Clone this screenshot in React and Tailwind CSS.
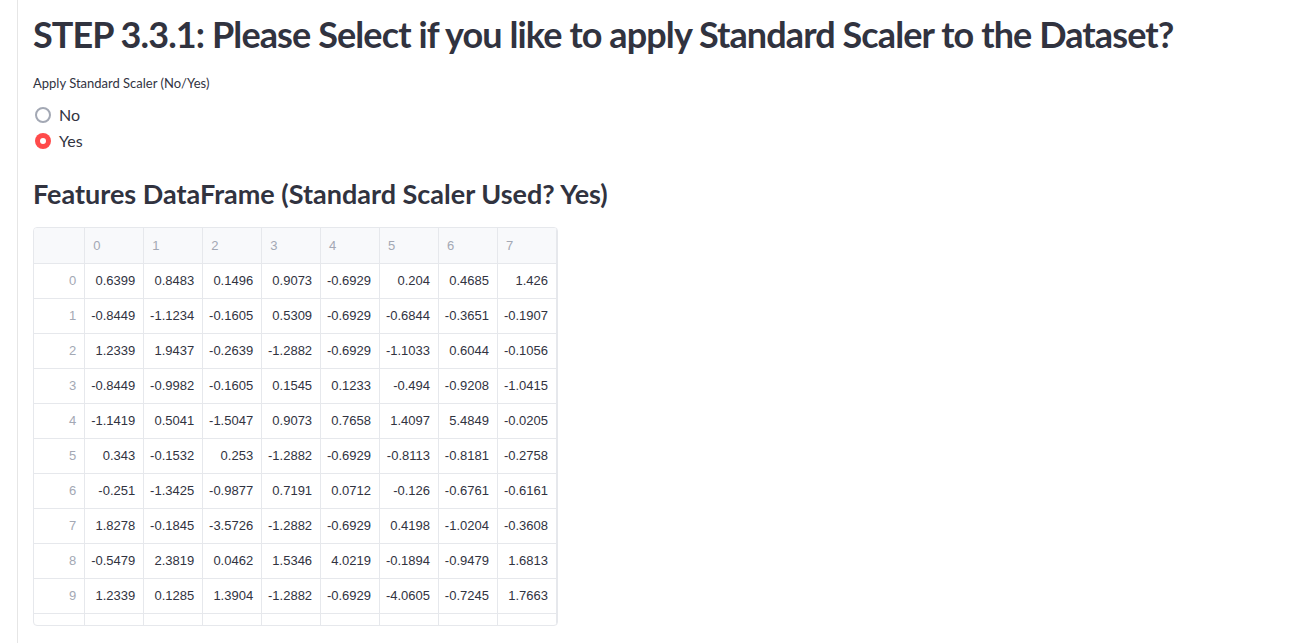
import React from 'react';

const rows = [
  ['0.6399', '0.8483', '0.1496', '0.9073', '-0.6929', '0.204', '0.4685', '1.426'],
  ['-0.8449', '-1.1234', '-0.1605', '0.5309', '-0.6929', '-0.6844', '-0.3651', '-0.1907'],
  ['1.2339', '1.9437', '-0.2639', '-1.2882', '-0.6929', '-1.1033', '0.6044', '-0.1056'],
  ['-0.8449', '-0.9982', '-0.1605', '0.1545', '0.1233', '-0.494', '-0.9208', '-1.0415'],
  ['-1.1419', '0.5041', '-1.5047', '0.9073', '0.7658', '1.4097', '5.4849', '-0.0205'],
  ['0.343', '-0.1532', '0.253', '-1.2882', '-0.6929', '-0.8113', '-0.8181', '-0.2758'],
  ['-0.251', '-1.3425', '-0.9877', '0.7191', '0.0712', '-0.126', '-0.6761', '-0.6161'],
  ['1.8278', '-0.1845', '-3.5726', '-1.2882', '-0.6929', '0.4198', '-1.0204', '-0.3608'],
  ['-0.5479', '2.3819', '0.0462', '1.5346', '4.0219', '-0.1894', '-0.9479', '1.6813'],
  ['1.2339', '0.1285', '1.3904', '-1.2882', '-0.6929', '-4.0605', '-0.7245', '1.7663'],
];

const cols = ['0', '1', '2', '3', '4', '5', '6', '7'];

function Radio({ label, checked }) {
  return (
    <label className="flex items-center h-[26px] gap-[8px] cursor-pointer">
      {checked ? (
        <span className="w-[16px] h-[16px] rounded-full bg-[#ff4b4b] flex items-center justify-center">
          <span className="w-[6px] h-[6px] rounded-full bg-white"></span>
        </span>
      ) : (
        <span className="w-[16px] h-[16px] rounded-full border-2 border-[#a3a8b4] bg-white"></span>
      )}
      <span className="text-[16px] text-[#31333f]">{label}</span>
    </label>
  );
}

function DataTable() {
  return (
    <div className="w-[525px] h-[399px] border border-[#e6e8ec] rounded-[4px] overflow-hidden font-['Liberation_Sans',Arial,sans-serif] text-[13px]">
      <table className="border-collapse table-fixed">
        <colgroup>
          <col className="w-[51px]" />
          {cols.map((c) => (
            <col key={c} className="w-[59px]" />
          ))}
        </colgroup>
        <thead>
          <tr className="h-[35px] bg-[#f8f9fb]">
            <th className="border-r border-b border-[#e6e8ec]"></th>
            {cols.map((c) => (
              <th key={c} className="border-r border-b border-[#e6e8ec] text-left font-normal text-[#a3a8b4] pl-[8px]">
                {c}
              </th>
            ))}
          </tr>
        </thead>
        <tbody>
          {rows.map((r, i) => (
            <tr key={i} className="h-[35px]">
              <td className="border-r border-b border-[#e6e8ec] text-right pr-[8px] text-[#a3a8b4]">{i}</td>
              {r.map((v, j) => (
                <td key={j} className="border-r border-b border-[#e6e8ec] text-right pr-[8px] text-[#31333f]">
                  {v}
                </td>
              ))}
            </tr>
          ))}
          <tr className="h-[35px]">
            <td className="border-r border-[#e6e8ec]"></td>
            {cols.map((c) => (
              <td key={c} className="border-r border-[#e6e8ec]"></td>
            ))}
          </tr>
        </tbody>
      </table>
    </div>
  );
}

export default function App() {
  return (
    <div className="flex min-h-[643px] bg-white font-['Lato',sans-serif] text-[#31333f]">
      <div className="w-[18px] shrink-0 border-r border-[#e6e6e6]"></div>
      <div className="pl-[15px] pt-[12px]">
        <h1 className="text-[36px] font-bold leading-[44px] tracking-[-0.9px] whitespace-nowrap">
          STEP 3.3.1: Please Select if you like to apply Standard Scaler to the Dataset?
        </h1>
        <div className="mt-[19px] text-[13px] leading-[16px]">Apply Standard Scaler (No/Yes)</div>
        <div className="mt-[11px] flex flex-col pl-[2px]">
          <Radio label="No" checked={false} />
          <Radio label="Yes" checked={true} />
        </div>
        <h3 className="mt-[22px] text-[27px] font-bold leading-[36px]">
          Features DataFrame (Standard Scaler Used? Yes)
        </h3>
        <div className="mt-[15px]">
          <DataTable />
        </div>
      </div>
    </div>
  );
}
